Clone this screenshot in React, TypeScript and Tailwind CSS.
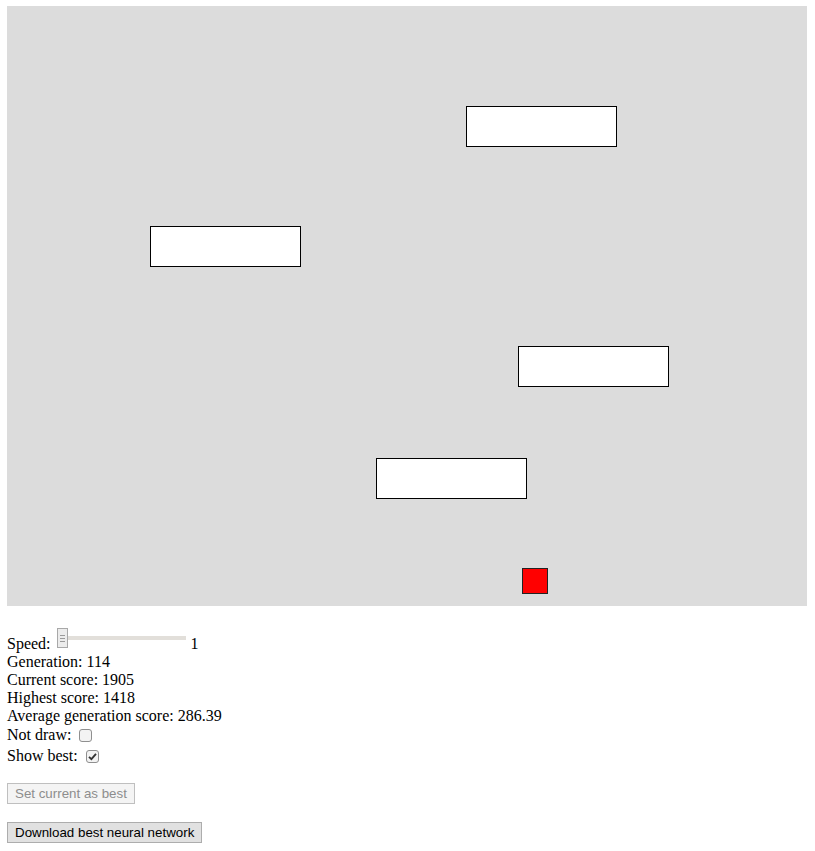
import React from "react";

const rects = [
  { x: 459.5, y: 100.5 },
  { x: 143.5, y: 220.5 },
  { x: 511.5, y: 340.5 },
  { x: 369.5, y: 452.5 },
];

function Checkbox({ checked }: { checked?: boolean }) {
  return (
    <div className="w-[13px] h-[13px] rounded-[3px] border border-[#8f8f8f] bg-[#f3f3f3] flex items-center justify-center">
      {checked && (
        <svg width="9" height="9" viewBox="0 0 9 9">
          <path d="M1 4.8 L3.4 7.2 L8 1.8" fill="none" stroke="#333" strokeWidth="1.8" />
        </svg>
      )}
    </div>
  );
}

export default function App() {
  return (
    <div className="pt-[6px] pl-[7px] text-[16px] text-black bg-white min-h-[851px] font-['Liberation_Serif',serif]">
      <svg width="800" height="600" className="block">
        <rect x="0" y="0" width="800" height="600" fill="#dcdcdc" />
        {rects.map((r, i) => (
          <rect key={i} x={r.x} y={r.y} width="150" height="40" fill="#ffffff" stroke="#000" strokeWidth="1" />
        ))}
        <rect x="515.5" y="562.5" width="25" height="25" fill="#ff0000" stroke="#222" strokeWidth="1" />
      </svg>

      <div className="mt-[22px] flex items-start">
        <span className="mt-[7px] leading-[18px]">Speed:</span>
        <div className="relative ml-[6px] w-[129px] h-[20px]">
          <div className="absolute left-[8px] right-0 top-[8px] h-[4px] bg-[#e2dfda]" />
          <div className="absolute left-0 top-0 w-[11px] h-[20px] border border-[#a8a8a8] bg-[#ececec] flex flex-col items-center justify-center gap-[2px]">
            <div className="w-[5px] h-px bg-[#9a9a9a]" />
            <div className="w-[5px] h-px bg-[#9a9a9a]" />
            <div className="w-[5px] h-px bg-[#9a9a9a]" />
          </div>
        </div>
        <span className="mt-[7px] ml-[5px] leading-[18px]">1</span>
      </div>
      <div className="leading-[18px]">Generation: 114</div>
      <div className="leading-[18px]">Current score: 1905</div>
      <div className="leading-[18px]">Highest score: 1418</div>
      <div className="leading-[18px]">Average generation score: 286.39</div>
      <div className="h-[20px] flex items-start">
        <span className="mt-[1px] leading-[18px]">Not draw:</span>
        <div className="ml-[8px] mt-[4px]">
          <Checkbox />
        </div>
      </div>
      <div className="h-[21px] flex items-start">
        <span className="mt-[2px] leading-[18px]">Show best:</span>
        <div className="ml-[8px] mt-[5px]">
          <Checkbox checked />
        </div>
      </div>

      <div className="mt-[17px] flex">
        <button
          disabled
          className="h-[21px] px-[7px] border border-[#bfbfbf] bg-[#f4f4f4] text-[#8d8d8d] text-[13.33px] leading-[17px] font-['Liberation_Sans',Arial,sans-serif]"
        >
          Set current as best
        </button>
      </div>
      <div className="mt-[18px] flex">
        <button className="h-[21px] px-[7px] border border-[#adadad] bg-[#e1e1e1] text-black text-[13.33px] leading-[17px] font-['Liberation_Sans',Arial,sans-serif]">
          Download best neural network
        </button>
      </div>
    </div>
  );
}
